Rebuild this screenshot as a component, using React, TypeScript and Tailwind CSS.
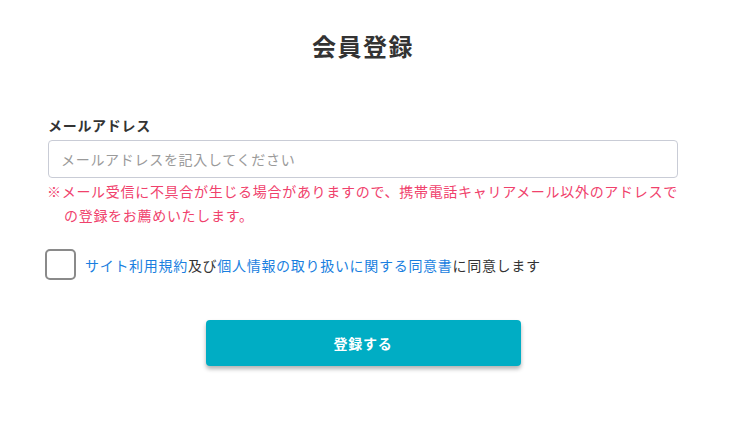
import React from "react";

export default function App() {
  return (
    <div
      className="min-h-[422px] w-full bg-white text-[#333]"
      style={{ fontFamily: '"Noto Sans CJK JP", "Noto Sans", sans-serif' }}
    >
      <div className="ml-[48px] w-[630px] pt-[28px]">
        <h1 className="text-center text-[24px] font-bold leading-[36px] tracking-[0.06em] text-[#333]">
          会員登録
        </h1>
        <div className="mt-[50px]">
          <label className="block text-[14px] font-bold leading-[22px] tracking-[0.05em] text-[#333]">
            メールアドレス
          </label>
          <input
            type="email"
            placeholder="メールアドレスを記入してください"
            className="mt-[4px] block h-[38px] w-full rounded-[4px] border border-[#c9ccd6] bg-white px-[12px] text-[14px] tracking-[0.05em] text-[#333] placeholder:text-[#9a9a9a] outline-none"
          />
          <p className="-ml-[1px] mt-[1px] pl-[17px] -indent-[17px] text-[14px] leading-[24px] tracking-[0.05em] text-[#f0416c]">
            ※メール受信に不具合が生じる場合がありますので、携帯電話キャリアメール以外のアドレスでの登録をお薦めいたします。
          </p>
        </div>
        <div className="-ml-[3px] mt-[22px] flex items-center gap-[9px]">
          <button
            type="button"
            aria-label="同意"
            className="h-[31px] w-[31px] shrink-0 rounded-[5px] border-2 border-[#8a8a8a] bg-white"
          />
          <p className="text-[14px] leading-[22px] tracking-[0.05em] text-[#333]">
            <a className="text-[#1a7fe0]">サイト利用規約</a>及び
            <a className="text-[#1a7fe0]">個人情報の取り扱いに関する同意書</a>
            に同意します
          </p>
        </div>
        <div className="mt-[40px] flex justify-center">
          <button
            type="button"
            className="h-[46px] w-[315px] rounded-[4px] bg-[#00adc4] text-[14px] font-bold tracking-[0.05em] text-white shadow-[0_3px_4px_rgba(0,0,0,0.3)]"
          >
            登録する
          </button>
        </div>
      </div>
    </div>
  );
}
